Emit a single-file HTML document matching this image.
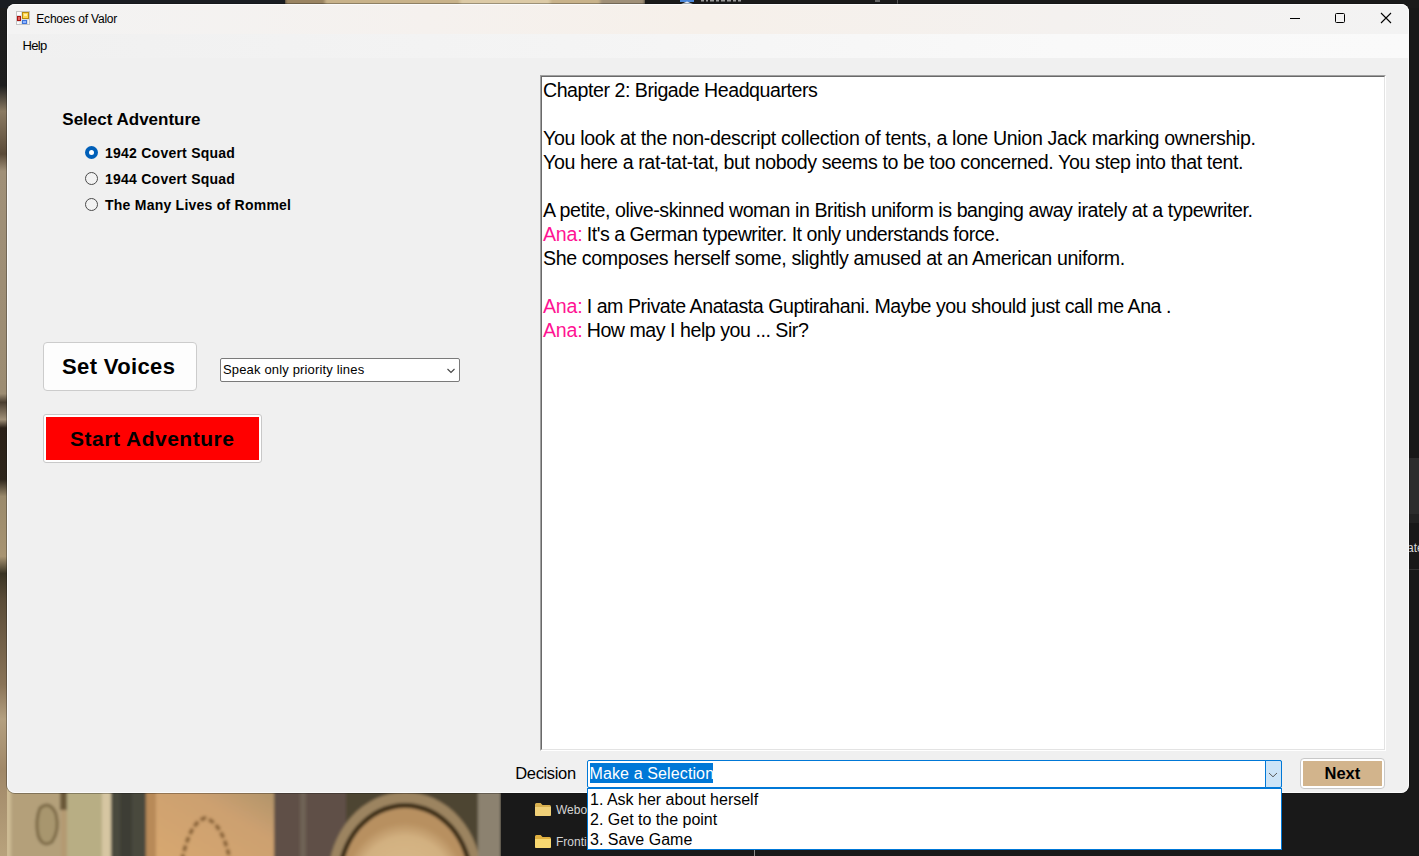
<!DOCTYPE html>
<html><head><meta charset="utf-8">
<style>
*{margin:0;padding:0;box-sizing:border-box}
html,body{width:1419px;height:856px;overflow:hidden;background:#181818;font-family:"Liberation Sans",sans-serif}
body{position:relative}
.a{position:absolute;white-space:nowrap}
.rl{font-size:19.6px;line-height:24px;color:#000}
.pink{color:#ff1493}
</style></head>
<body>
<!-- desktop background -->
<svg class="a" style="left:0;top:0" width="1419" height="856" viewBox="0 0 1419 856">
<defs>
<filter id="bl" x="-5%" y="-5%" width="110%" height="110%"><feGaussianBlur stdDeviation="1.5"/></filter>
<linearGradient id="org" x1="0" y1="1" x2="1" y2="0"><stop offset="0" stop-color="#d8a870"/><stop offset="0.6" stop-color="#cca070"/><stop offset="1" stop-color="#a89068"/></linearGradient>
<radialGradient id="egg" cx="0.5" cy="0.6" r="0.5"><stop offset="0" stop-color="#dcc090"/><stop offset="0.8" stop-color="#d2b080"/><stop offset="1" stop-color="#b89060"/></radialGradient>
</defs>
<rect x="0" y="0" width="1419" height="856" fill="#181818"/>
<g filter="url(#bl)">
<rect x="0" y="780" width="501" height="80" fill="#b49a72"/>
<rect x="-5" y="780" width="16" height="80" fill="#cdbb94"/>
<rect x="11" y="780" width="50" height="80" fill="#b4a07a"/>
<rect x="60" y="780" width="8" height="30" fill="#6a5838"/>
<path d="M40 808 Q50 800 56 814 Q60 830 52 842 Q42 848 38 835 Q35 820 40 808Z" fill="#a8966e" stroke="#7a6844" stroke-width="3"/>
<rect x="67" y="780" width="40" height="80" fill="#b8ae84"/>
<rect x="102" y="780" width="9" height="80" fill="#d6c6a2"/>
<rect x="111" y="780" width="35" height="80" fill="#4a4a3e"/>
<rect x="120" y="780" width="12" height="80" fill="#3e3e34"/>
<rect x="146" y="780" width="134" height="80" fill="url(#org)"/>
<rect x="146" y="780" width="10" height="80" fill="#b88a58"/>
<path d="M182 860 Q190 822 205 818 Q222 822 230 860" fill="none" stroke="#8a6438" stroke-width="4" stroke-dasharray="6 3"/>
<rect x="274" y="780" width="72" height="80" fill="#5e5046"/>
<rect x="300" y="780" width="6" height="80" fill="#6e6254"/>
<rect x="346" y="780" width="155" height="80" fill="#4e4432"/>
<ellipse cx="405" cy="880" rx="77" ry="88" fill="#9c8460"/>
<ellipse cx="405" cy="880" rx="68" ry="77" fill="#3e2e18"/>
<ellipse cx="405" cy="880" rx="63" ry="72" fill="url(#egg)"/>
<rect x="478" y="780" width="23" height="80" fill="#8c8270"/>
</g>
<rect x="501" y="780" width="918" height="76" fill="#191919"/>
<defs><linearGradient id="lstrip" x1="0" y1="0" x2="0" y2="1">
<stop offset="0" stop-color="#1c1c1c"/><stop offset="0.10" stop-color="#1e1e1e"/><stop offset="0.13" stop-color="#8a7a62"/>
<stop offset="0.18" stop-color="#5a4a38"/><stop offset="0.2" stop-color="#a09078"/><stop offset="0.46" stop-color="#9c8c72"/>
<stop offset="0.47" stop-color="#4a3e30"/><stop offset="0.49" stop-color="#a09078"/><stop offset="0.5" stop-color="#2a2018"/>
<stop offset="0.56" stop-color="#2e261c"/><stop offset="0.58" stop-color="#9a8a6c"/><stop offset="0.65" stop-color="#a89472"/>
<stop offset="0.67" stop-color="#3a3424"/><stop offset="0.7" stop-color="#5a4c38"/><stop offset="0.8" stop-color="#8a7458"/>
<stop offset="0.84" stop-color="#b4a080"/><stop offset="0.9" stop-color="#a08868"/><stop offset="1" stop-color="#b8a27c"/>
</linearGradient></defs>
<rect x="0" y="0" width="7" height="856" fill="url(#lstrip)"/>
<rect x="1409" y="458" width="10" height="56" fill="#2c2c2c"/>
<rect x="1409" y="514" width="10" height="9" fill="#222"/>
<rect x="1409" y="569" width="10" height="1" fill="#333"/>
<!-- top strip -->
<g filter="url(#bl)">
<rect x="285" y="-4" width="360" height="12" fill="#c8b28a"/>
<rect x="285" y="-4" width="40" height="12" fill="#9a8462"/>
<rect x="460" y="-4" width="90" height="12" fill="#dccaa6"/>
<rect x="600" y="-4" width="45" height="12" fill="#a09078"/>
</g>
<rect x="0" y="0" width="285" height="8" fill="#1a1d22"/>
<rect x="645" y="0" width="774" height="8" fill="#1a1a1a"/>
<rect x="680" y="0" width="14" height="2" fill="#4a86d8"/>
<path d="M681 4L687 1.5L693 4Z" fill="#dfe8f4"/>
<g fill="#9a9a9a"><rect x="701" y="0" width="3" height="1.5"/><rect x="706" y="0" width="2" height="1.5"/><rect x="710" y="0" width="4" height="1.5"/><rect x="716" y="0" width="3" height="1.5"/><rect x="721" y="0" width="4" height="1.5"/><rect x="727" y="0" width="4" height="1.5"/><rect x="733" y="0" width="3" height="1.5"/><rect x="738" y="0" width="3" height="1.5"/></g>
<rect x="875" y="0" width="5" height="2" fill="#666"/>
<rect x="897" y="0" width="1" height="4" fill="#555"/>
</svg>
<!-- explorer items -->
<svg class="a" style="left:535px;top:803px" width="16" height="13" viewBox="0 0 17 13" preserveAspectRatio="none"><path d="M0 1.5Q0 0 1.5 0H6L8 2H15.5Q17 2 17 3.5V11.5Q17 13 15.5 13H1.5Q0 13 0 11.5Z" fill="#d8b050"/><path d="M0 4H17V11.5Q17 13 15.5 13H1.5Q0 13 0 11.5Z" fill="#f0d078"/></svg>
<svg class="a" style="left:535px;top:835px" width="16" height="13" viewBox="0 0 17 13" preserveAspectRatio="none"><path d="M0 1.5Q0 0 1.5 0H6L8 2H15.5Q17 2 17 3.5V11.5Q17 13 15.5 13H1.5Q0 13 0 11.5Z" fill="#e0b040"/><path d="M0 4H17V11.5Q17 13 15.5 13H1.5Q0 13 0 11.5Z" fill="#f8d870"/></svg>
<div class="a" style="left:556px;top:803px;font-size:12px;line-height:14px;color:#d4d4d4">Webo</div>
<div class="a" style="left:556px;top:835px;font-size:12px;line-height:14px;color:#d4d4d4">Frontier</div>
<div class="a" style="left:1407px;top:541px;font-size:12px;line-height:14px;color:#d8d8d8">ate</div>
<div class="a" style="left:754px;top:850px;width:1px;height:6px;background:#8a8a8a"></div>
<!-- window -->
<div class="a" style="left:6px;top:3px;width:1404px;height:791px;border-radius:9px;background:#0e0e0e;opacity:.3"></div>
<div class="a" style="left:7px;top:4px;width:1402px;height:789px;background:#f0f0f0;border-radius:8px;overflow:hidden">
  <div class="a" style="left:0;top:0;width:1402px;height:30px;background:linear-gradient(90deg,#f3f3f3 0%,#f5f1ee 30%,#f6f0ea 50%,#f4f1ef 75%,#f3f3f3 100%)"></div>
  <div class="a" style="left:0;top:30px;width:1402px;height:24px;background:linear-gradient(90deg,#f0f0f0 0%,#f4f4f4 40%,#f9f9f9 75%,#fafafa 100%)"></div>
  <div class="a" style="left:0;top:0;width:1402px;height:789px;border:1px solid #fbfbfb;border-radius:8px"></div>
</div>

<!-- title bar -->
<svg class="a" style="left:16px;top:11px" width="14" height="14" viewBox="0 0 14 14" shape-rendering="crispEdges">
<rect x="0" y="0" width="14" height="14" fill="#c4c4c4"/>
<rect x="1" y="1" width="12" height="12" fill="#dcdfe4"/>
<rect x="1" y="1" width="4" height="3" fill="#fdfdfd"/>
<rect x="1" y="5" width="4" height="5" fill="#a81410"/>
<rect x="2" y="6" width="2" height="3" fill="#e86060"/>
<rect x="6" y="1" width="7" height="7" fill="#b88a10"/>
<rect x="7" y="2" width="5" height="5" fill="#ffd64a"/>
<rect x="8" y="3" width="3" height="2" fill="#ffeeaa"/>
<rect x="6" y="9" width="5" height="4" fill="#3d74d8"/>
<rect x="7" y="10" width="3" height="2" fill="#90b4ff"/>
<rect x="1" y="11" width="2" height="2" fill="#fdfdfd"/>
<rect x="3" y="11" width="2" height="2" fill="#f0f0f0"/>
<rect x="12" y="9" width="1" height="4" fill="#f4f4f4"/>
</svg>
<div class="a" style="left:36.3px;top:11px;font-size:12px;line-height:16px;color:#000;letter-spacing:-0.2px">Echoes of Valor</div>
<div class="a" style="left:1290px;top:18px;width:10px;height:1px;background:#000"></div>
<div class="a" style="left:1335px;top:13px;width:10px;height:10px;border:1px solid #000;border-radius:1.5px"></div>
<svg class="a" style="left:1380px;top:12px" width="12" height="12" viewBox="0 0 12 12"><path d="M1 1L11 11M11 1L1 11" stroke="#000" stroke-width="1.1"/></svg>
<div class="a" style="left:22.4px;top:38px;font-size:13px;line-height:16px;color:#000;letter-spacing:-0.6px">Help</div>

<!-- left panel -->
<div class="a" style="left:62.3px;top:110px;font-size:17px;line-height:20px;font-weight:bold;color:#000;letter-spacing:0px">Select Adventure</div>

<div class="a" style="left:85px;top:146px;width:13px;height:13px;border-radius:50%;background:#005fb8"></div>
<div class="a" style="left:89px;top:150px;width:5px;height:5px;border-radius:50%;background:#fff"></div>
<div class="a" style="left:105px;top:144px;font-size:14px;line-height:18px;font-weight:bold;color:#000;letter-spacing:0.24px">1942 Covert Squad</div>
<div class="a" style="left:85px;top:172px;width:13px;height:13px;border-radius:50%;border:1px solid #4a4a4a;background:#f2f2f2"></div>
<div class="a" style="left:105px;top:170px;font-size:14px;line-height:18px;font-weight:bold;color:#000;letter-spacing:0.24px">1944 Covert Squad</div>
<div class="a" style="left:85px;top:198px;width:13px;height:13px;border-radius:50%;border:1px solid #4a4a4a;background:#f2f2f2"></div>
<div class="a" style="left:105px;top:196px;font-size:14px;line-height:18px;font-weight:bold;color:#000;letter-spacing:0.24px">The Many Lives of Rommel</div>

<div class="a" style="left:43px;top:342px;width:154px;height:49px;background:#fdfdfd;border:1px solid #cccccc;border-radius:4px"></div>
<div class="a" style="left:62px;top:355px;font-size:22px;line-height:24px;font-weight:bold;color:#000;letter-spacing:0.36px">Set Voices</div>

<div class="a" style="left:220px;top:358px;width:240px;height:24px;background:#fff;border:1px solid #7a7a7a;border-radius:2px"></div>
<div class="a" style="left:223px;top:362px;font-size:13px;line-height:16px;color:#000;letter-spacing:0.16px">Speak only priority lines</div>
<svg class="a" style="left:446px;top:368px" width="10" height="6" viewBox="0 0 10 6"><path d="M1.5 1L5 4.5L8.5 1" fill="none" stroke="#444" stroke-width="1.1"/></svg>

<div class="a" style="left:43px;top:414px;width:219px;height:49px;background:#fff;border:1px solid #c8c8c8;border-radius:3px"></div>
<div class="a" style="left:46px;top:417px;width:213px;height:43px;background:#ff0000"></div>
<div class="a" style="left:70px;top:427px;font-size:21px;line-height:24px;font-weight:bold;color:#000;letter-spacing:0.51px">Start Adventure</div>

<!-- rich text box -->
<div class="a" style="left:540px;top:75px;width:846px;height:676px;background:#fff;border-top:1px solid #a0a0a0;border-left:1px solid #a0a0a0;border-right:1px solid #fff;border-bottom:1px solid #fff">
  <div class="a" style="left:0;top:0;right:0;bottom:0;border-top:1px solid #696969;border-left:1px solid #696969;border-right:1px solid #e3e3e3;border-bottom:1px solid #e3e3e3"></div>
</div>
<div class="a rl" style="top:78.30px;left:543px;letter-spacing:-0.4633px">Chapter 2: Brigade Headquarters</div>
<div class="a rl" style="top:126.30px;left:543px;letter-spacing:-0.3295px">You look at the non-descript collection of tents, a lone Union Jack marking ownership.</div>
<div class="a rl" style="top:150.30px;left:543px;letter-spacing:-0.3888px">You here a rat-tat-tat, but nobody seems to be too concerned. You step into that tent.</div>
<div class="a rl" style="top:198.30px;left:543px;letter-spacing:-0.4224px">A petite, olive-skinned woman in British uniform is banging away irately at a typewriter.</div>
<div class="a rl" style="top:222.30px;left:543px"><span class="pink" style="letter-spacing:-0.2px">Ana:</span></div>
<div class="a rl" style="top:222.30px;left:586.7px;letter-spacing:-0.4702px">It's a German typewriter. It only understands force.</div>
<div class="a rl" style="top:246.30px;left:543px;letter-spacing:-0.3586px">She composes herself some, slightly amused at an American uniform.</div>
<div class="a rl" style="top:294.30px;left:543px"><span class="pink" style="letter-spacing:-0.2px">Ana:</span></div>
<div class="a rl" style="top:294.30px;left:586.7px;letter-spacing:-0.4592px">I am Private Anatasta Guptirahani. Maybe you should just call me Ana .</div>
<div class="a rl" style="top:318.30px;left:543px"><span class="pink" style="letter-spacing:-0.2px">Ana:</span></div>
<div class="a rl" style="top:318.30px;left:586.7px;letter-spacing:-0.4615px">How may I help you ... Sir?</div>

<!-- bottom -->
<div class="a" style="left:515.3px;top:763px;font-size:16.5px;line-height:20px;color:#000;letter-spacing:-0.36px">Decision</div>
<div class="a" style="left:1300px;top:758px;width:85px;height:31px;background:#fff;border:1px solid #c8c8c8;border-radius:4px"></div>
<div class="a" style="left:1303px;top:761px;width:79px;height:25px;background:#d2b48c"></div>
<div class="a" style="left:1324.5px;top:763px;font-size:16.5px;line-height:20px;font-weight:bold;color:#000;letter-spacing:0px">Next</div>

<!-- combo + dropdown -->
<div class="a" style="left:587px;top:760px;width:695px;height:28px;background:#fff;border:1px solid #0078d7;border-radius:2px"></div>
<div class="a" style="left:1265px;top:760px;width:17px;height:28px;background:#cce4f7;border:1px solid #0078d7;border-radius:0 2px 2px 0"></div>
<svg class="a" style="left:1268px;top:772px" width="11" height="7" viewBox="0 0 11 7"><path d="M1 1L5 4.8L9 1" fill="none" stroke="#5a5a5a" stroke-width="1"/></svg>
<div class="a" style="left:590px;top:763px;width:123px;height:20px;background:#0078d7"></div>
<div class="a" style="left:589.5px;top:764px;font-size:16px;line-height:20px;color:#fff;letter-spacing:0.12px">Make a Selection</div>
<div class="a" style="left:587px;top:788px;width:695px;height:62px;background:#fff;border:1px solid #0078d7"></div>
<div class="a" style="left:590px;top:790px;font-size:16px;color:#000;line-height:20px">
  <div>1. Ask her about herself</div>
  <div>2. Get to the point</div>
  <div>3. Save Game</div>
</div>
</body></html>
